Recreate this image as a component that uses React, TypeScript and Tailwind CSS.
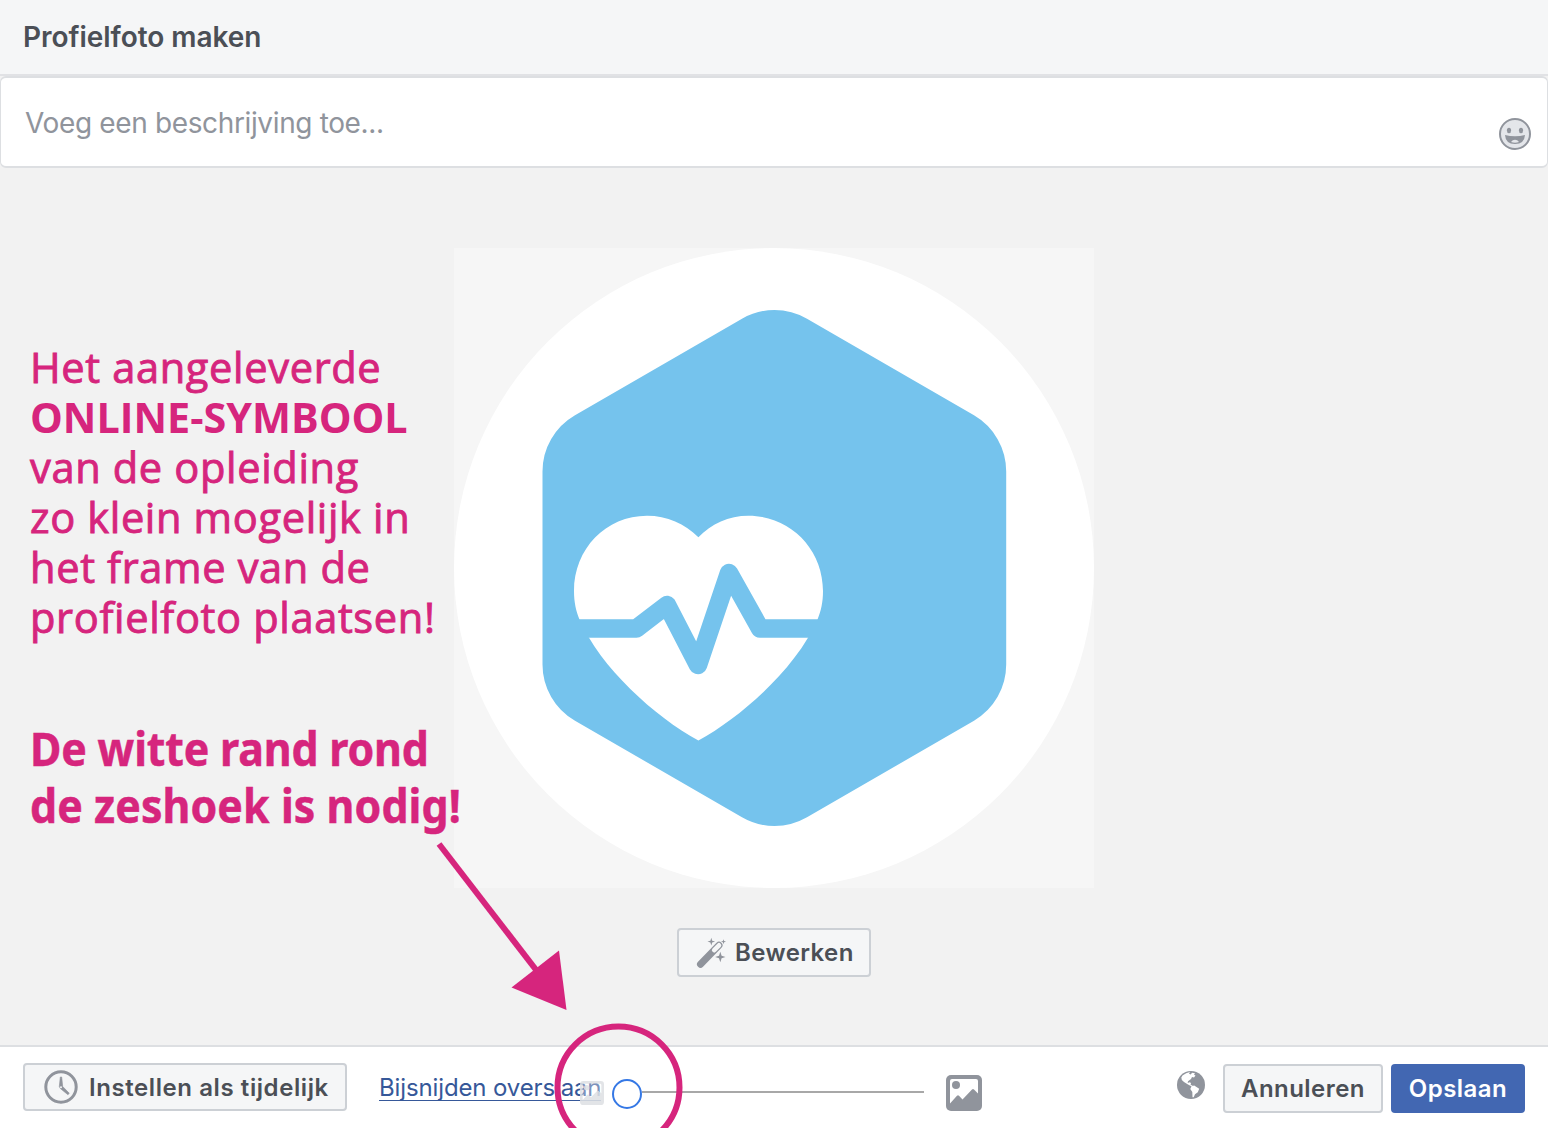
import React from "react";

const UI = "font-['Inter','Liberation_Sans',sans-serif]";

function Smiley() {
  return (
    <svg width="34" height="34" viewBox="0 0 34 34" className="block">
      <circle cx="17" cy="17" r="15" fill="#e4e6ea" stroke="#90949c" strokeWidth="2" />
      <ellipse cx="11" cy="13.5" rx="2.1" ry="2.7" fill="#90949c" />
      <ellipse cx="23" cy="13.5" rx="2.1" ry="2.7" fill="#90949c" />
      <path d="M7 18q10 2.4 20 0q-.6 9-10 9t-10-9z" fill="#90949c" />
      <path d="M13 25q1.500-2.200 4-2.200t4 2.200q-4 1.400-8 0z" fill="#e4e6ea" />
    </svg>
  );
}

function Wand() {
  return (
    <svg width="32" height="32" viewBox="0 0 32 32" className="block">
      <path d="M4.500 27.300L23 8.300" stroke="#90949c" strokeWidth="7" strokeLinecap="round" />
      <path d="M18.200 13.200L23 8.300" stroke="#f5f6f7" strokeWidth="4.600" strokeLinecap="round" />
      <path d="M15.300 .8l.9 2.900 2.900.9-2.900.9-.9 2.900-.9-2.900-2.900-.9 2.900-.9zM27.500 2.200l.6 1.900 1.900.6-1.900.6-.6 1.900-.6-1.900-1.900-.6 1.900-.6zM24.300 14.800l1.300 3.900 3.900 1.300-3.900 1.300-1.300 3.900-1.300-3.900-3.900-1.300 3.900-1.300z" fill="#90949c" />
    </svg>
  );
}

function Clock() {
  return (
    <svg width="34" height="34" viewBox="0 0 34 34" className="block">
      <circle cx="17" cy="17" r="15.200" fill="none" stroke="#90949c" strokeWidth="3" />
      <path d="M16.300 7h1.400l1 9.500 6.600 6.800-1.400 1.400-7.600-6.200-1-2z" fill="#90949c" stroke="#90949c" strokeWidth=".6" strokeLinejoin="round" />
      <circle cx="17" cy="17.300" r="1" fill="#f5f6f7" />
    </svg>
  );
}

function Picture() {
  return (
    <svg width="36" height="36" viewBox="0 0 36 36" className="ml-[22px] mt-2.5 block">
      <rect width="36" height="36" rx="5" fill="#90949c" />
      <path d="M4 6q0-2 2-2h24q2 0 2 2v12.500l-4-4q-1-.9-2 0L16.500 24.500l-3.500-3.700q-1-1-2 0L4 28.500z" fill="#fff" />
      <circle cx="10" cy="10" r="4" fill="#90949c" />
    </svg>
  );
}

function FadedPicture() {
  return (
    <svg width="24" height="24" viewBox="0 0 36 36" className="relative -ml-[21px] mt-2.5 block">
      <path d="M4 6q0-2 2-2h24q2 0 2 2v12.500l-4-4q-1-.9-2 0L16.500 24.500l-3.500-3.700q-1-1-2 0L4 28.500z" fill="#fff" fillOpacity=".35" />
      <path fillRule="evenodd" d="M5 0h26q5 0 5 5v26q0 5-5 5H5q-5 0-5-5V5q0-5 5-5zM4 6v22.500l7-7.700q1-1 2 0l3.500 3.700 9.500-10q1-.9 2 0l4 4V6q0-2-2-2H6q-2 0-2 2z" fill="#dee0e4" fillOpacity=".88" />
      <circle cx="10" cy="10" r="4" fill="#dee0e4" fillOpacity=".88" />
    </svg>
  );
}

function Globe() {
  return (
    <svg width="28" height="28" viewBox="0 0 28 28" className="block">
      <circle cx="14" cy="14" r="14" fill="#90949c" />
      <path d="M5.500 4.500Q9 1.800 13 1L12 2.800l1.800.8 1.200-1.800 3 .4-1 1.600 1.500.8-1.500 2-2-.5-1 1.800-3 2.400-.3 1.800 2-.8 1.300.8-.4 1.600 2.400 1.400-1.500.1-3.500-1.600-4-2.600Q4 9 4.300 6.500zM14.500 15.300l2.700-.8 5 3.200-1.400 3.500-2.800 2-1.300 3h-1.200l-.2-5.300-2-3z" fill="#fff" />
    </svg>
  );
}

function Hexagon() {
  return (
    <svg width="640" height="640" viewBox="454 248 640 640" className="block">
      <circle cx="774" cy="568" r="320" fill="#fff" />
      <path d="M742 318.700a65 65 0 0 1 65 0L974 415.300a65 65 0 0 1 32.200 56.300V664.400a65 65 0 0 1-32.200 56.300L807 817.300a65 65 0 0 1-65 0L575 720.700a65 65 0 0 1-32.500-56.300V471.600a65 65 0 0 1 32.500-56.300z" fill="#75c3ed" />
      <path d="M698.400 537.300C685 523.500 667 515.700 647 515.700c-41 0-73 33-73 75.300 0 11 2 20 5.500 28.500C600 667 655 717 698.400 740.500 742 717 797 667 817.500 619.500c3.500-8.500 5.500-17.500 5.500-28.500 0-42.300-33-75.300-74.500-75.300-20 0-37 7.800-50.100 21.600z" fill="#fff" />
      <path d="M566 628.400h70.500L667 605l31 60 31-92 31 55.400h70" fill="none" stroke="#75c3ed" strokeWidth="18.500" strokeLinejoin="round" />
    </svg>
  );
}

export default function App() {
  return (
    <div className={`relative flex h-[1128px] w-[1548px] flex-col overflow-hidden bg-white ${UI}`}>
      <header className="flex h-[76px] shrink-0 items-center border-b-2 border-[#e1e2e5] bg-[#f5f6f7] pl-[23px]">
        <h1 className="text-[28px] font-semibold tracking-[-0.05px] text-[#4b4f56]">Profielfoto maken</h1>
      </header>

      <div className="shrink-0 bg-[#f2f2f2]">
        <div className="flex h-[92px] items-center justify-between rounded-md border-2 border-x border-[#dddfe2] bg-white pl-6 pr-[15px] pt-1">
          <span className="-mt-0.5 text-[28px] tracking-[-0.36px] text-[#90949c]">Voeg een beschrijving toe...</span>
          <div className="mt-5">
            <Smiley />
          </div>
        </div>
      </div>

      <main className="flex flex-1 flex-col items-center bg-[#f2f2f2] pt-20">
        <div className="bg-[#f6f6f6]">
          <Hexagon />
        </div>
        <button className="mt-10 flex h-[49px] w-[194px] items-center gap-[7px] rounded border-2 border-[#ccd0d5] bg-[#f5f6f7] pl-[17px]">
          <Wand />
          <span className="whitespace-nowrap text-[24px] font-semibold tracking-[0.4px] text-[#4b4f56]">Bewerken</span>
        </button>
      </main>

      <footer className="flex h-[83px] shrink-0 items-center border-t-2 border-[#dddfe2] bg-white pl-[23px] pr-[23px]">
        <button className="mb-0.5 flex h-12 w-[324px] items-center gap-[11px] rounded border-2 border-[#ccd0d5] bg-[#f5f6f7] pl-[19px]">
          <Clock />
          <span className="mt-0.5 whitespace-nowrap text-[24px] font-semibold tracking-[0.58px] text-[#4b4f56]">Instellen als tijdelijk</span>
        </button>
        <a className="ml-8 w-[222px] whitespace-nowrap border-b border-[#365899] pt-0.5 text-[24px] leading-[24px] tracking-[-0.13px] text-[#365899]">Bijsnijden overslaan</a>
        <FadedPicture />
        <div className="ml-2 mt-3 flex items-center">
          <div className="h-[30px] w-[30px] rounded-full border-2 border-[#3578e5] bg-white" />
          <div className="mb-1 h-0.5 w-[282px] bg-[#a8a8a8]" />
        </div>
        <Picture />
        <div className="mb-1.5 ml-auto">
          <Globe />
        </div>
        <button className="ml-[18px] mt-0.5 flex h-[49px] w-40 items-center justify-center rounded border-2 border-[#ccd0d5] bg-[#f5f6f7] text-[24px] font-semibold tracking-[0.45px] text-[#4b4f56]">Annuleren</button>
        <button className="ml-2 mt-0.5 flex h-[49px] w-[134px] items-center justify-center rounded bg-[#4267b2] text-[24px] font-semibold tracking-[0.45px] text-white">Opslaan</button>
      </footer>

      <div className="absolute left-[30px] top-[342px] whitespace-nowrap font-['Open_Sans',sans-serif] text-[41.6px] font-normal leading-[50px] tracking-[0.64px] text-[#d6257d] [-webkit-text-stroke:0.9px_#d6257d]">
        <p>Het aangeleverde</p>
        <p className="text-[41.3px] font-bold tracking-normal [-webkit-text-stroke:0px]">ONLINE-SYMBOOL</p>
        <p>van de opleiding</p>
        <p>zo klein mogelijk in</p>
        <p>het frame van de</p>
        <p>profielfoto plaatsen!</p>
      </div>
      <div className="absolute left-[30px] top-[720px] origin-left scale-x-[0.932] whitespace-nowrap font-['Noto_Sans',sans-serif] text-[46px] font-bold leading-[57px] text-[#d6257d] [-webkit-text-stroke:0.5px_#d6257d]">
        <p className="tracking-[-0.18px]">De witte rand rond</p>
        <p className="tracking-[0.08px]">de zeshoek is nodig!</p>
      </div>
      <svg width="300" height="300" viewBox="430 828 300 300" className="pointer-events-none absolute left-[430px] top-[828px]">
        <path d="M439 844L540 975" stroke="#d6257d" strokeWidth="6" />
        <path d="M511.500 987.500L559 950.500l7.500 59.500z" fill="#d6257d" />
        <circle cx="618.500" cy="1087.500" r="61" fill="none" stroke="#d6257d" strokeWidth="6" />
      </svg>
    </div>
  );
}
